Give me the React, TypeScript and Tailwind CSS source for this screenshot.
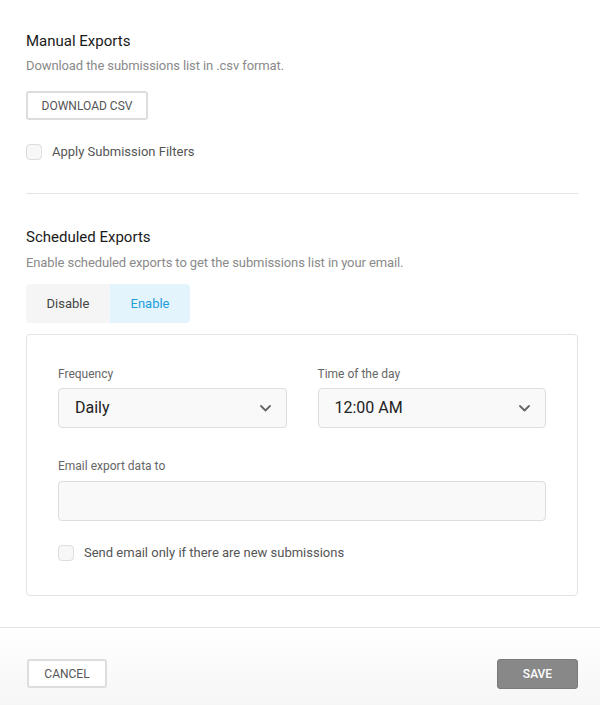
import { useState } from 'react';

function Checkbox({ label }: { label: string }) {
  return (
    <label className="flex items-center gap-[10px] cursor-pointer">
      <span className="w-4 h-4 rounded-[4px] border border-[#ddd] bg-[#f7f7f7]" />
      <span className="text-[13px] leading-[18px] text-[#555]">{label}</span>
    </label>
  );
}

function Chevron() {
  return (
    <svg width="11" height="7" viewBox="0 0 11 7" fill="none">
      <path d="M1 1l4.5 4.5L10 1" stroke="#666" strokeWidth="1.8" strokeLinecap="round" strokeLinejoin="round" />
    </svg>
  );
}

function SelectBox({ label, value }: { label: string; value: string }) {
  return (
    <div className="flex-1 flex flex-col">
      <span className="text-[12px] leading-4 text-[#666]">{label}</span>
      <div className="mt-[6px] h-10 flex items-center justify-between pl-4 pr-[15px] bg-[#f9f9f9] border border-[#ddd] rounded-[4px]">
        <span className="text-[16px] text-[#222]">{value}</span>
        <Chevron />
      </div>
    </div>
  );
}

export default function App() {
  const [enabled, setEnabled] = useState(true);

  return (
    <div className="w-[600px] h-[705px] bg-white flex flex-col font-['Roboto',sans-serif]">
      <div className="flex-1 pt-[31px] pl-[26px] pr-[22px]">
        <h3 className="text-[15px] leading-5 font-normal text-[#1a1a1a]">Manual Exports</h3>
        <p className="mt-[6px] text-[13px] leading-[18px] tracking-[-0.1px] text-[#8a8a8a]">
          Download the submissions list in .csv format.
        </p>
        <button className="mt-4 h-[29px] w-[122px] border-2 border-[#ddd] rounded-[3px] text-[12px] text-[#555] uppercase">
          Download CSV
        </button>
        <div className="mt-[23px]">
          <Checkbox label="Apply Submission Filters" />
        </div>

        <div className="mt-[32px] h-px bg-[#e3e3e3]" />

        <h3 className="mt-[33px] text-[15px] leading-5 font-normal text-[#1a1a1a]">Scheduled Exports</h3>
        <p className="mt-[7px] text-[13px] leading-[18px] tracking-[-0.1px] text-[#8a8a8a]">
          Enable scheduled exports to get the submissions list in your email.
        </p>
        <div className="mt-3 flex">
          <button
            onClick={() => setEnabled(false)}
            className={`h-[39px] w-[84px] rounded-l-[4px] text-[13px] ${
              enabled ? 'bg-[#f5f5f5] text-[#444]' : 'bg-[#e3f4fd] text-[#1e9fda]'
            }`}
          >
            Disable
          </button>
          <button
            onClick={() => setEnabled(true)}
            className={`h-[39px] w-[80px] rounded-r-[4px] text-[13px] ${
              enabled ? 'bg-[#e3f4fd] text-[#1e9fda]' : 'bg-[#f5f5f5] text-[#444]'
            }`}
          >
            Enable
          </button>
        </div>

        <div className="mt-[11px] border border-[#e3e3e3] rounded-[4px] pt-[31px] pb-[33px] pl-[31px] pr-[31px]">
          <div className="flex gap-[31px]">
            <SelectBox label="Frequency" value="Daily" />
            <SelectBox label="Time of the day" value="12:00 AM" />
          </div>
          <div className="mt-[30px] text-[12px] leading-4 text-[#666]">Email export data to</div>
          <div className="mt-[7px] h-10 bg-[#f9f9f9] border border-[#ddd] rounded-[4px]" />
          <div className="mt-[23px]">
            <Checkbox label="Send email only if there are new submissions" />
          </div>
        </div>
      </div>

      <div className="h-[78px] border-t border-[#e5e5e5] bg-gradient-to-b from-white to-[#f6f6f6] flex items-start justify-between pt-[31px] pl-[27px] pr-[22px]">
        <button className="h-[29px] w-[80px] border-2 border-[#ddd] rounded-[3px] bg-white text-[12px] text-[#555] uppercase">
          Cancel
        </button>
        <button className="h-[30px] w-[81px] border border-[#7a7a7a] rounded-[3px] bg-[#888] text-[12px] font-medium text-white uppercase">
          Save
        </button>
      </div>
    </div>
  );
}
